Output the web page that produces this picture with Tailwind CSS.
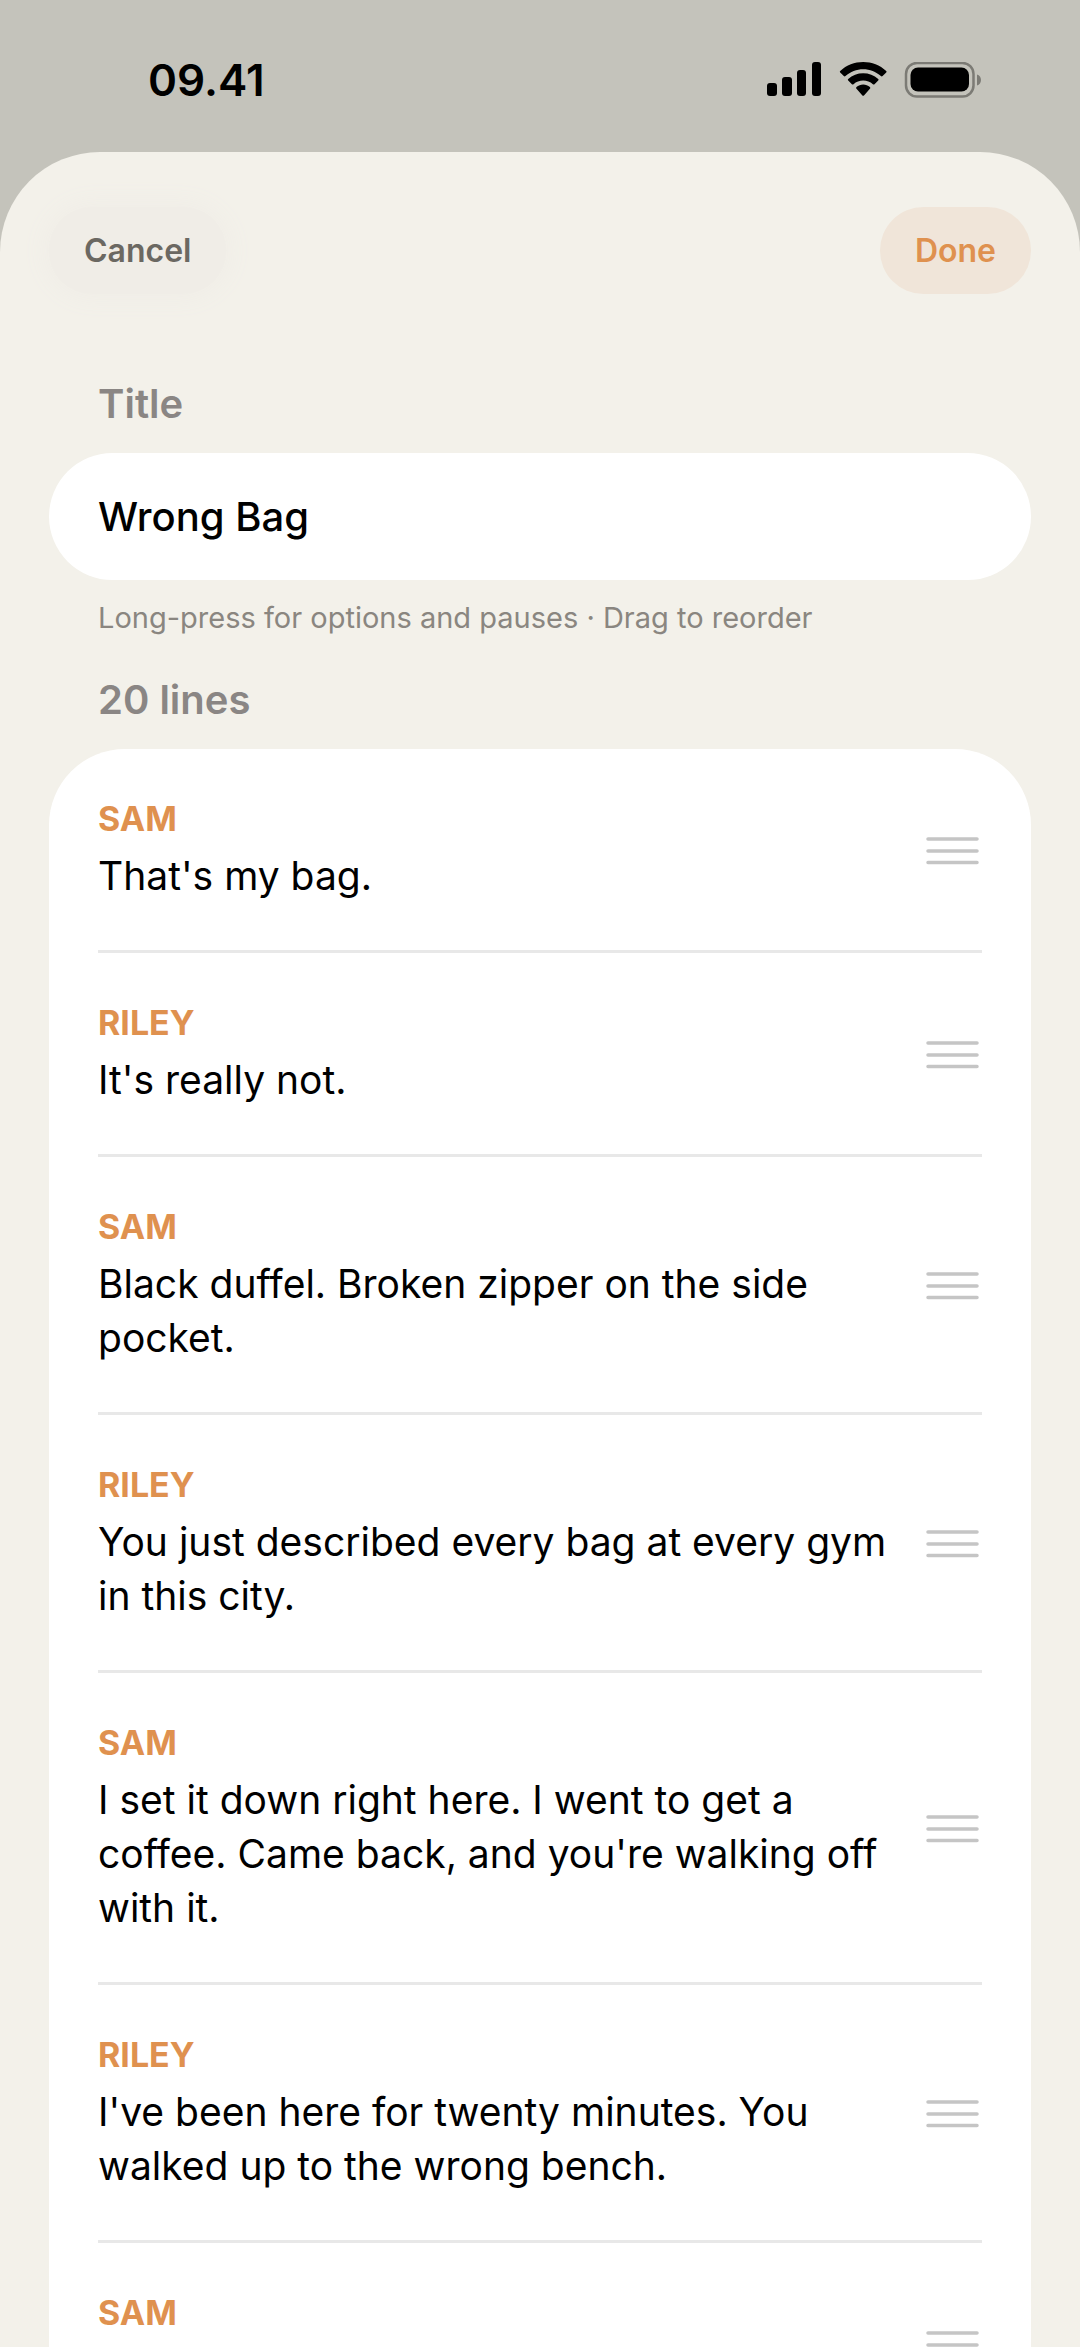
<!DOCTYPE html>
<html lang="en">
<head>
<meta charset="utf-8">
<meta name="viewport" content="width=device-width, initial-scale=1">
<title>Edit script</title>
<script src="https://cdn.jsdelivr.net/npm/@tailwindcss/browser@4"></script>
</head>
<body class="flex h-screen flex-col overflow-hidden bg-[#c4c3bb] font-['Inter',sans-serif] text-[39px] leading-[54px] text-black">

<!-- Status bar -->
<header class="flex h-[152px] shrink-0 items-center justify-between pt-2 pr-[99px] pl-[148px]">
  <time class="text-[44px] font-semibold">09.41</time>
  <svg class="h-9 w-[214px]" viewBox="0 0 214 36" role="img" aria-label="Signal, Wi-Fi and battery full">
    <rect x="0" y="21" width="10" height="13" rx="3"/>
    <rect x="15" y="15" width="10" height="19" rx="3"/>
    <rect x="30" y="8" width="9" height="26" rx="3"/>
    <rect x="45" y="0" width="9" height="34" rx="3"/>
    <path d="M73.2 10.6a1.2 1.2 0 0 1 0-1.7C79.5 3.200 87.500 0 96.200 0s16.700 3.200 23 8.900a1.200 1.200 0 0 1 0 1.700l-3.600 3.500a1.200 1.200 0 0 1-1.700 0C109 9.600 102.800 7.200 96.200 7.200s-12.800 2.400-17.700 6.900a1.200 1.200 0 0 1-1.700 0z"/>
    <path d="M81.200 18.600a1.200 1.200 0 0 1 0-1.700c4.100-3.700 9.400-5.700 15-5.700s10.900 2 15 5.700a1.200 1.200 0 0 1 0 1.700l-3.700 3.600a1.200 1.200 0 0 1-1.600 0c-2.700-2.300-6.100-3.600-9.700-3.600s-7 1.300-9.700 3.600a1.200 1.200 0 0 1-1.600 0z"/>
    <path d="M89.500 26.700a1.200 1.200 0 0 1 0-1.800c1.900-1.500 4.200-2.400 6.700-2.400s4.800.9 6.700 2.400a1.200 1.200 0 0 1 0 1.800l-5.900 6.700a1.200 1.200 0 0 1-1.600 0z"/>
    <rect x="139" y="1" width="67.500" height="33.500" rx="11" fill="none" stroke="#7c7b75" stroke-width="2.500"/>
    <rect x="143.500" y="5.500" width="58.500" height="24" rx="7.500"/>
    <path d="M210 12.500c2.500.8 4 3 4 5.500s-1.500 4.700-4 5.500z" fill="#7c7b75"/>
  </svg>
</header>

<!-- Edit sheet -->
<main class="min-h-0 flex-1 overflow-y-auto rounded-t-[100px] bg-[#f3f1ea] px-[49px] pt-[55px] [scrollbar-width:none]">
  <form>
    <div class="flex items-center justify-between text-[32px] font-semibold">
      <button type="button" class="h-[87px] rounded-full bg-[#f0ede7] px-[35px] text-[#6b6862] shadow-[0_0_24px_4px_#f0ede7]">Cancel</button>
      <button type="submit" class="h-[87px] rounded-full bg-[#f0e5d9] px-[35px] text-[#df914f]">Done</button>
    </div>

    <label for="title" class="mt-[83px] block px-[49px] text-[40px] font-semibold text-[#8a8684]">Title</label>
    <input id="title" type="text" value="Wrong Bag" aria-describedby="hint" class="mt-[22px] block h-[127px] w-full rounded-full bg-white px-[49px] text-[40px] font-medium outline-none">
    <p id="hint" class="mt-5 px-[49px] text-[29px] leading-[36px] text-[#8a8680]">Long-press for options and pauses · Drag to reorder</p>
  </form>

  <h2 class="mt-[37px] px-[49px] text-[40px] font-semibold text-[#8a8684]">20 lines</h2>
  <ol id="lines" class="mt-[22px] rounded-t-[76px] bg-white px-[49px]"></ol>
</main>

<template id="line">
  <li class="flex items-center gap-6 border-b-3 border-[#e8e8e8]">
    <div class="min-w-0 flex-1 pt-12 pb-[47px]">
      <h3 class="text-[34px] leading-[44px] font-bold text-[#df914f]"></h3>
      <p class="mt-2 min-h-[54px]"></p>
    </div>
    <button type="button" aria-label="Reorder" class="shrink-0">
      <svg class="h-[30px] w-[58px]" viewBox="0 0 58 30" fill="none" stroke="#c5c5c5" stroke-width="3.500" stroke-linecap="round">
        <path d="M4 4h49M4 16h49M4 27.500h49"/>
      </svg>
    </button>
  </li>
</template>

<script>
const lines = [
  ["SAM", "That's my bag."],
  ["RILEY", "It's really not."],
  ["SAM", "Black duffel. Broken zipper on the side pocket."],
  ["RILEY", "You just described every bag at every gym in this city."],
  ["SAM", "I set it down right here. I went to get a coffee. Came back, and you're walking off with it."],
  ["RILEY", "I've been here for twenty minutes. You walked up to the wrong bench."],
  ["SAM", ""]
];
const list = document.getElementById("lines");
const template = document.getElementById("line");
for (const [speaker, text] of lines) {
  const row = template.content.cloneNode(true);
  row.querySelector("h3").textContent = speaker;
  row.querySelector("p").textContent = text;
  list.append(row);
}
</script>
</body>
</html>
